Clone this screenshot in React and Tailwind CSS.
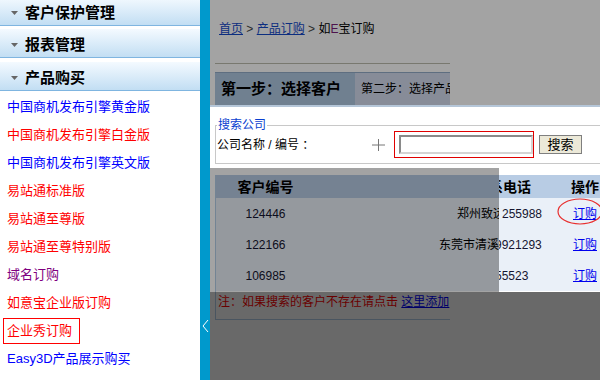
import React from "react";

const links = [
  { t: "中国商机发布引擎黄金版", c: "text-[#0000ff]" },
  { t: "中国商机发布引擎白金版", c: "text-[#ff0000]" },
  { t: "中国商机发布引擎英文版", c: "text-[#0000ff]" },
  { t: "易站通标准版", c: "text-[#ff0000]" },
  { t: "易站通至尊版", c: "text-[#ff0000]" },
  { t: "易站通至尊特别版", c: "text-[#ff0000]" },
  { t: "域名订购", c: "text-[#800080]" },
  { t: "如意宝企业版订购", c: "text-[#ff0000]" },
  { t: "企业秀订购", c: "text-[#ff0000]", boxed: true },
  { t: "Easy3D产品展示购买", c: "text-[#0000ff]" },
];

function Header({ title, cls }) {
  return (
    <div
      className={
        "h-[29px] shrink-0 border-b border-[#7fb5e0] bg-linear-to-b from-[#f4faff] to-[#c2def3] flex items-center pt-[3px] pl-[11px] " +
        cls
      }
    >
      <svg width="7" height="4" viewBox="0 0 7 4">
        <polygon points="0,0 7,0 3.5,4" fill="#666" />
      </svg>
      <span className="ml-[7px] text-[15px] font-bold text-black leading-[18px]">{title}</span>
    </div>
  );
}

function Sidebar() {
  return (
    <div className="w-[200px] shrink-0 flex flex-col bg-white">
      <Header title="客户保护管理" cls="mt-[-3px]" />
      <Header title="报表管理" cls="mt-[3px]" />
      <Header title="产品购买" cls="mt-[4px]" />
      <div className="pt-[2px] flex flex-col text-[13px] leading-[16px]">
        {links.map((l) =>
          l.boxed ? (
            <div key={l.t} className="h-[28px] flex items-center pl-[3px]">
              <span className={"w-[77px] h-[26px] border border-[#ff0000] flex items-center pl-[3px] underline-offset-2 " + l.c}>
                {l.t}
              </span>
            </div>
          ) : (
            <div key={l.t} className={"h-[28px] flex items-center pl-[7px] whitespace-nowrap " + l.c}>
              {l.t}
            </div>
          )
        )}
      </div>
    </div>
  );
}

const rows = [
  { id: "124446", name: "郑州致远", namePad: "pl-[142px]", phone: "255988", lead: "" },
  { id: "122166", name: "东莞市清溪", namePad: "pl-[124px]", phone: "921293", lead: "9" },
  { id: "106985", name: "", namePad: "pl-[0px]", phone: "5523", lead: "5" },
];

function Main() {
  return (
    <div className="relative flex-1 h-[380px] overflow-hidden bg-white text-[12px] text-black">
      <div className="pl-[5px]">
        <div className="h-[37px] pt-[21px] pl-[4px] leading-[16px] whitespace-nowrap">
          <a className="text-[#1448c8] underline">首页</a>
          <span className="text-[#444]"> &gt; </span>
          <a className="text-[#1448c8] underline">产品订购</a>
          <span className="text-[#444]"> &gt; </span>
          如<span className="text-[#7a1f7a]">E</span>宝订购
        </div>
        <div className="mt-[26px] w-[235px] h-px bg-[#bcbcae]" />
        <div className="mt-[8px] w-[235px] h-[33px] flex overflow-hidden border-t border-[#94adc8]">
          <div className="w-[140px] shrink-0 bg-[#afc8e1] flex items-center pl-[6px] text-[15px] font-bold whitespace-nowrap">
            第一步：选择客户
          </div>
          <div className="flex-1 bg-[#d3dcee] flex items-center pl-[6px] whitespace-nowrap">
            第二步：选择产品
          </div>
        </div>
      </div>
      <div className="h-[2px] bg-[#b5c6d8]" />
      <div className="pl-[5px]">
        <fieldset className="mt-[11px] w-[420px] border border-[#c8c8c8] pl-[1px] pb-[5px]">
          <legend className="px-[1px] leading-[14px] text-[#0a3fd0]">搜索公司</legend>
          <div className="flex items-center h-[27px] mt-[-1px]">
            <span className="w-[155px] shrink-0 whitespace-nowrap">公司名称 / 编号 ：</span>
            <svg width="13" height="12" viewBox="0 0 13 12" className="shrink-0">
              <line x1="0" y1="6" x2="13" y2="6" stroke="#777" strokeWidth="1" />
              <line x1="6.5" y1="0" x2="6.5" y2="12" stroke="#777" strokeWidth="1" />
            </svg>
            <div className="ml-[9px] w-[140px] h-[27px] shrink-0 border border-[#e00000] flex items-center pl-[4px]">
              <div className="w-[134px] h-[19px] border-2 border-t-[#8a8a8a] border-l-[#8a8a8a] border-b-[#d4d4d4] border-r-[#d4d4d4] bg-white" />
            </div>
            <div className="ml-[5px] w-[43px] h-[19px] shrink-0 bg-[#ece9d8] border border-[#7f7f7f] flex items-center justify-center text-[13px] leading-[15px]">
              搜索
            </div>
          </div>
        </fieldset>
      </div>
      <div className="pl-[5px] mt-[11px]">
        <div className="w-[235px] border-l border-b border-[#b4cfe8] pb-[10px]">
          <div className="w-[399px]">
            <div className="h-[23px] flex items-center bg-[#b8cce4] text-[14px] font-bold leading-[16px]">
              <div className="w-[99px] shrink-0 text-center">客户编号</div>
              <div className="w-[184px] shrink-0" />
              <div className="w-[56px] shrink-0 overflow-hidden whitespace-nowrap">
                <span className="ml-[-24px] inline-block">联系电话</span>
              </div>
              <div className="w-[60px] shrink-0 text-center">操作</div>
            </div>
            {rows.map((r) => (
              <div key={r.id} className="h-[31px] flex items-center bg-[#eaf0f8] leading-[16px]">
                <div className="w-[99px] shrink-0 text-center text-[#151530]">{r.id}</div>
                <div className={"w-[184px] shrink-0 overflow-hidden whitespace-nowrap " + r.namePad}>{r.name}</div>
                <div className="w-[56px] shrink-0 overflow-hidden whitespace-nowrap pl-[3px] text-[#151530]">
                  {r.lead ? <span className="ml-[-7px]">{r.lead}</span> : null}
                  {r.phone}
                </div>
                <div className="w-[60px] shrink-0 text-center">
                  <a className="text-[#0000ee] underline">订购</a>
                </div>
              </div>
            ))}
          </div>
          <div className="mt-[4px] pl-[2px] leading-[14px] whitespace-nowrap text-[#ff0000]">
            注：如果搜索的客户不存在请点击 <a className="text-[#0000ff] underline">这里添加</a>
          </div>
        </div>
      </div>

      <div className="absolute left-0 top-0 w-full h-[105px] bg-black/36" />
      <div className="absolute left-0 top-[168px] w-[289px] h-[124px] bg-black/36" />
      <div className="absolute left-0 top-[292px] w-full h-[88px] bg-black/59" />
      <svg className="absolute left-[346px] top-[197px]" width="50" height="30" viewBox="0 0 50 30">
        <ellipse cx="24" cy="14.5" rx="22" ry="12.5" fill="none" stroke="#e83030" strokeWidth="1.2" />
      </svg>
    </div>
  );
}

export default function App() {
  return (
    <div className="flex w-[600px] h-[380px] overflow-hidden bg-white font-['Liberation_Sans','Noto_Sans_CJK_SC',sans-serif]">
      <Sidebar />
      <div className="w-[10px] shrink-0 bg-[#0099cc] flex flex-col pt-[319px] pl-[2px]">
        <svg width="7" height="14" viewBox="0 0 7 14">
          <polyline points="6,1 1,7 6,13" fill="none" stroke="#fff" strokeWidth="1" />
        </svg>
      </div>
      <Main />
    </div>
  );
}
